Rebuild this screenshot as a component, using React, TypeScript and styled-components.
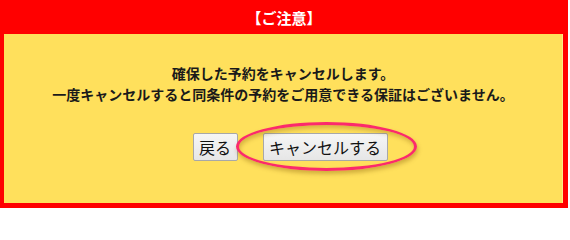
import React from "react";
import styled, { createGlobalStyle } from "styled-components";

const GlobalStyle = createGlobalStyle`
  html, body {
    margin: 0;
    padding: 0;
    background: #ffffff;
  }
  body {
    font-family: "Noto Sans CJK JP", "Noto Sans", sans-serif;
  }
`;

const App = () => {
  return (
    <>
      <GlobalStyle />
      <NoticeBox>
        <NoticeHeader>【ご注意】</NoticeHeader>
        <NoticeBody>
          <Message>
            確保した予約をキャンセルします。
            <br />
            一度キャンセルすると同条件の予約をご用意できる保証はございません。
          </Message>
          <ButtonRow>
            <ActionButton>戻る</ActionButton>
            <Highlight>
              <ActionButton $wide>キャンセルする</ActionButton>
              <Ring />
            </Highlight>
          </ButtonRow>
        </NoticeBody>
      </NoticeBox>
    </>
  );
};

export default App;

const NoticeBox = styled.div`
  width: 568px;
  height: 208px;
  box-sizing: border-box;
  background: #ff0000;
  padding: 0 5px 5px 4px;
  display: flex;
  flex-direction: column;
`;

const NoticeHeader = styled.div`
  height: 34px;
  display: flex;
  align-items: center;
  justify-content: center;
  color: #ffffff;
  font-weight: bold;
  font-size: 15px;
  padding-left: 1px;
`;

const NoticeBody = styled.div`
  flex: 1;
  background: #ffe05c;
  border-right: 1px solid #ffe98c;
  display: flex;
  flex-direction: column;
  align-items: center;
  padding-top: 29px;
`;

const Message = styled.p`
  margin: 0;
  text-align: center;
  font-weight: bold;
  font-size: 14px;
  line-height: 21px;
  color: #1a1a1a;
`;

const ButtonRow = styled.div`
  display: flex;
  align-items: center;
  gap: 25px;
  margin-top: 28px;
  margin-left: 14px;
`;

const ActionButton = styled.button<{ $wide?: boolean }>`
  height: 28px;
  width: ${(p) => (p.$wide ? "125px" : "45px")};
  box-sizing: border-box;
  padding: 0;
  font-family: "Noto Sans CJK JP", "Noto Sans", sans-serif;
  font-size: 16px;
  color: #111111;
  background: linear-gradient(#f6f6f6, #e6e6e6);
  border: 1px solid #a8a8a8;
  border-radius: 2px;
`;

const Highlight = styled.span`
  position: relative;
  display: inline-flex;
`;

const Ring = styled.span`
  position: absolute;
  left: -27px;
  top: -11px;
  width: 181px;
  height: 49px;
  box-sizing: border-box;
  border: 3px solid #fb2a6c;
  border-radius: 50%;
  box-shadow: 1px 3px 4px rgba(120, 80, 0, 0.35),
    inset 1px 3px 4px rgba(120, 80, 0, 0.3);
  pointer-events: none;
`;
